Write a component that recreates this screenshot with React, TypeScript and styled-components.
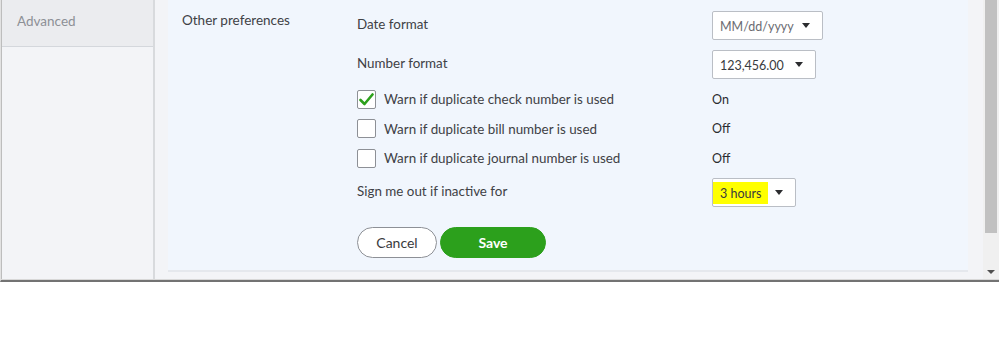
import React from "react";
import styled, { createGlobalStyle } from "styled-components";

const Global = createGlobalStyle`
  html, body { margin: 0; padding: 0; background: #ffffff; }
  body { font-family: Lato, "Open Sans", "Liberation Sans", sans-serif; color: #404145; }
  * { box-sizing: border-box; }
`;

const Frame = styled.div`
  width: 999px;
  height: 282px;
  display: flex;
  border-left: 1px solid #e2e2e2;
  box-shadow: inset 1px 0 0 #bdbdbd;
  border-bottom: 2px solid #737373;
  overflow: hidden;
`;

const Inner = styled.div`
  flex: 1;
  display: flex;
  padding-left: 1px;
  border-bottom: 1px solid #d8d8d8;
`;

const Sidebar = styled.nav`
  width: 153px;
  flex: none;
  background: #f3f4f7;
  border-right: 2px solid #d8dadd;
`;

const NavItem = styled.div<{ $active?: boolean }>`
  height: 47px;
  padding: 13px 0 0 15px;
  font-size: 13.5px;
  color: #8d9096;
  background: ${(p) => (p.$active ? "#ebecef" : "transparent")};
  border-bottom: 1px solid #d4d7dc;
`;

const Main = styled.main`
  flex: 1;
  display: flex;
  background: #f3f4f7;
  padding: 0 15px 0 13px;
`;

const Panel = styled.section`
  flex: 1;
  display: grid;
  grid-template-columns: 175px 1fr;
  align-content: start;
  height: 272px;
  padding: 11px 0 0 14px;
  background: #f1f6fd;
  border-bottom: 2px solid #e5e8ed;
`;

const SectionTitle = styled.div`
  font-size: 13.5px;
  line-height: 18px;
`;

const Settings = styled.div`
  display: flex;
  flex-direction: column;
`;

const Row = styled.div<{ $h: number; $mt?: number }>`
  display: grid;
  grid-template-columns: 355px auto;
  align-items: center;
  height: ${(p) => p.$h}px;
  margin-top: ${(p) => p.$mt ?? 0}px;
  font-size: 13.4px;
`;

const Label = styled.span`
  margin-top: -3px;
`;

const CheckLabel = styled.label`
  display: flex;
  align-items: center;
  gap: 8px;
`;

const Box = styled.span`
  width: 19px;
  height: 19px;
  flex: none;
  background: #ffffff;
  border: 1px solid #8d9096;
  border-radius: 2px;
  display: flex;
  align-items: center;
  justify-content: center;
`;

const Value = styled.span`
  font-size: 12.5px;
  color: #2b2c2f;
`;

const Select = styled.div<{ $w: number }>`
  width: ${(p) => p.$w}px;
  height: 29px;
  background: #ffffff;
  border: 1px solid #babec5;
  border-radius: 2px;
  display: flex;
  align-items: center;
  justify-content: space-between;
  padding: 0 12px 0 0;
  font-size: 12.5px;
`;

const SelectText = styled.span<{ $muted?: boolean; $hl?: boolean }>`
  padding: 4px 7px 3px 7px;
  margin-top: 1px;
  color: ${(p) => (p.$muted ? "#6b6c72" : "#393a3d")};
  background: ${(p) => (p.$hl ? "#ffff00" : "transparent")};
`;

const Caret = styled.span`
  width: 0;
  height: 0;
  border-left: 4px solid transparent;
  border-right: 4px solid transparent;
  border-top: 5px solid #2b2c2f;
`;

const Buttons = styled.div`
  display: flex;
  gap: 3px;
  margin-top: 20px;
`;

const Button = styled.button<{ $primary?: boolean; $w: number }>`
  width: ${(p) => p.$w}px;
  height: 31px;
  border-radius: 16px;
  font-family: inherit;
  font-size: 14px;
  font-weight: ${(p) => (p.$primary ? 700 : 400)};
  color: ${(p) => (p.$primary ? "#ffffff" : "#393a3d")};
  background: ${(p) => (p.$primary ? "#2ca01c" : "#ffffff")};
  border: 1px solid ${(p) => (p.$primary ? "#2ca01c" : "#8d9096")};
  padding: 0;
`;

const Scrollbar = styled.div`
  width: 16px;
  flex: none;
  background: #f0f0f0;
  display: flex;
  flex-direction: column;
  align-items: center;
`;

const Thumb = styled.div`
  width: 12px;
  height: 233px;
  background: #c1c1c1;
`;

const DownArrow = styled.div`
  margin-top: 37px;
  width: 0;
  height: 0;
  border-left: 4px solid transparent;
  border-right: 4px solid transparent;
  border-top: 4px solid #505050;
`;

const Check = () => (
  <svg width="15" height="13" viewBox="0 0 15 13">
    <path d="M1.5 7 L5.5 11 L13.5 1.5" fill="none" stroke="#2ca01c" strokeWidth="2.6" strokeLinecap="round" strokeLinejoin="round" />
  </svg>
);

const checks = [
  { label: "Warn if duplicate check number is used", on: true, h: 30, mt: 5 },
  { label: "Warn if duplicate bill number is used", on: false, h: 29, mt: 0 },
  { label: "Warn if duplicate journal number is used", on: false, h: 30, mt: 0 },
];

export default function App() {
  return (
    <>
      <Global />
      <Frame>
        <Inner>
          <Sidebar>
            <NavItem $active>Advanced</NavItem>
          </Sidebar>
          <Main>
            <Panel>
              <SectionTitle>Other preferences</SectionTitle>
              <Settings>
                <Row $h={29}>
                  <Label>Date format</Label>
                  <Select $w={111}>
                    <SelectText $muted>MM/dd/yyyy</SelectText>
                    <Caret />
                  </Select>
                </Row>
                <Row $h={29} $mt={10}>
                  <Label>Number format</Label>
                  <Select $w={104}>
                    <SelectText>123,456.00</SelectText>
                    <Caret />
                  </Select>
                </Row>
                {checks.map((c) => (
                  <Row key={c.label} $h={c.h} $mt={c.mt}>
                    <CheckLabel>
                      <Box>{c.on && <Check />}</Box>
                      {c.label}
                    </CheckLabel>
                    <Value>{c.on ? "On" : "Off"}</Value>
                  </Row>
                ))}
                <Row $h={29} $mt={5}>
                  <Label>Sign me out if inactive for</Label>
                  <Select $w={84}>
                    <SelectText $hl>3 hours</SelectText>
                    <Caret />
                  </Select>
                </Row>
                <Buttons>
                  <Button $w={80}>Cancel</Button>
                  <Button $primary $w={106}>Save</Button>
                </Buttons>
              </Settings>
            </Panel>
          </Main>
          <Scrollbar>
            <Thumb />
            <DownArrow />
          </Scrollbar>
        </Inner>
      </Frame>
    </>
  );
}
